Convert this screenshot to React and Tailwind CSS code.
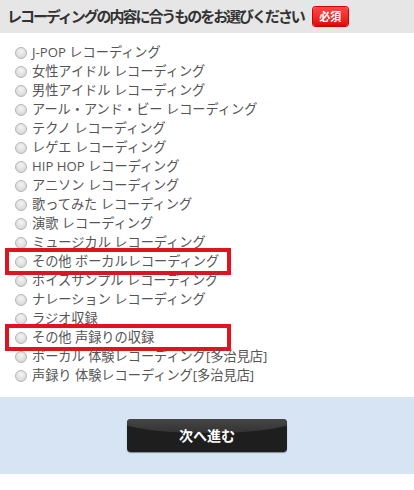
import React from "react";

const items = [
  "J-POP レコーディング",
  "女性アイドル レコーディング",
  "男性アイドル レコーディング",
  "アール・アンド・ビー レコーディング",
  "テクノ レコーディング",
  "レゲエ レコーディング",
  "HIP HOP レコーディング",
  "アニソン レコーディング",
  "歌ってみた レコーディング",
  "演歌 レコーディング",
  "ミュージカル レコーディング",
  "その他 ボーカルレコーディング",
  "ボイスサンプル レコーディング",
  "ナレーション レコーディング",
  "ラジオ収録",
  "その他 声録りの収録",
  "ボーカル 体験レコーディング[多治見店]",
  "声録り 体験レコーディング[多治見店]",
];
const highlighted = new Set([11, 15]);

function Radio() {
  return (
    <span className="inline-block w-[12px] h-[12px] rounded-full border border-[#b5b5b5] bg-[radial-gradient(circle_at_50%_35%,#f4f4f4,#d0d0d0)] shrink-0" />
  );
}

export default function App() {
  return (
    <div
      className="w-[414px] h-[490px] bg-white"
      style={{ fontFamily: '"Open Sans", "Noto Sans CJK JP", sans-serif' }}
    >
      <div className="h-[33px] bg-[#e6e6e6] flex items-center pl-[7px] gap-[9px]">
        <span className="text-[15px] font-bold text-[#333] tracking-[-2.05px]">
          レコーディングの内容に合うものをお選びください
        </span>
        <span className="h-[19px] w-[35px] rounded-[3px] bg-gradient-to-b from-[#ff4646] to-[#e00000] text-white text-[11px] font-bold flex items-center justify-center leading-none shadow-[0_0_0_1px_#d40000]">
          必須
        </span>
      </div>
      <div className="pt-[10px] pl-[5px] flex flex-col">
        {items.map((t, i) => (
          <div key={i} className="h-[19px] flex items-center">
            <div
              className={
                "flex items-center gap-[5px] h-[19px] " +
                (highlighted.has(i)
                  ? "outline outline-[4px] outline-[#e0141e] w-[218px] ml-[4px] pl-[6px]"
                  : "pl-[10px]")
              }
            >
              <Radio />
              <span className="text-[13.2px] text-[#555] whitespace-nowrap leading-none">
                {t}
              </span>
            </div>
          </div>
        ))}
      </div>
      <div className="mt-[12px] h-[77px] bg-[#d6e4f3] flex items-center justify-center">
        <button className="relative w-[160px] h-[33px] rounded-[4px] bg-[#1e1e1e] overflow-hidden text-white text-[14px] font-bold shadow-[0_1px_1px_rgba(0,0,0,0.4)]">
          <span className="absolute left-[-10px] right-[-10px] top-[-14px] h-[28px] rounded-[50%] bg-gradient-to-b from-[#5a5a5a] to-[#333]" />
          <span className="relative">次へ進む</span>
        </button>
      </div>
    </div>
  );
}
